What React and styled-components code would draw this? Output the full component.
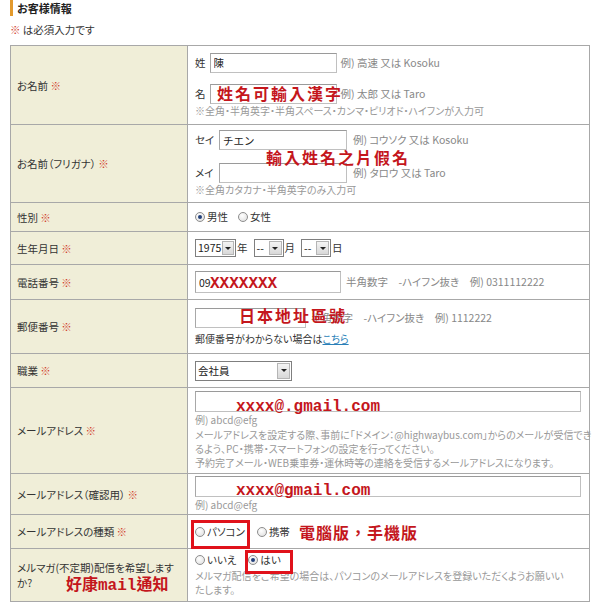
import React from 'react';
import styled, { createGlobalStyle } from 'styled-components';

const Global = createGlobalStyle`
  html, body { margin: 0; padding: 0; background: #fff; }
  body {
    font-family: "Noto Sans CJK JP", "Noto Sans", sans-serif;
    font-size: 10.5px;
    color: #333;
    font-feature-settings: "palt";
  }
`;

const Page = styled.div`
  width: 600px;
  height: 609px;
  overflow: hidden;
  padding-left: 10px;
  box-sizing: border-box;
`;

const Heading = styled.h2`
  margin: 0;
  height: 16px;
  display: flex;
  align-items: center;
  gap: 4px;
  font-size: 11px;
  font-weight: bold;
  color: #222;
  &::before {
    content: "";
    width: 3px;
    height: 16px;
    background: #e39a2c;
  }
`;

const Required = styled.p`
  margin: 7px 0 0;
  height: 14px;
  line-height: 14px;
  font-size: 10.5px;
`;

const Mark = styled.span`
  color: #d03a2a;
`;

const Table = styled.table`
  margin-top: 8px;
  width: 580px;
  table-layout: fixed;
  border-collapse: collapse;
  border: 1px solid #999;
`;

const Row = styled.tr`
  height: ${(p) => p.$h}px;
`;

const Label = styled.th`
  width: 170px;
  padding: 0 0 0 6px;
  background: #f0eed8;
  border: 1px solid #a8a8a8;
  text-align: left;
  font-weight: normal;
  vertical-align: middle;
  line-height: 15px;
  position: relative;
`;

const Cell = styled.td`
  padding: 0 6px 0 7px;
  border: 1px solid #a8a8a8;
  vertical-align: middle;
  position: relative;
  line-height: 14px;
`;

const Line = styled.div`
  display: flex;
  align-items: center;
  gap: ${(p) => p.$gap ?? 4}px;
  margin-top: ${(p) => p.$mt ?? 0}px;
  white-space: nowrap;
`;

const Prefix = styled.span`
  color: #333;
  min-width: ${(p) => p.$w ?? 0}px;
`;

const Input = styled.input`
  box-sizing: border-box;
  width: ${(p) => p.$w}px;
  height: ${(p) => p.$h ?? 20}px;
  margin: 0;
  padding: 0 3px;
  border: 1px solid #c0c0c0;
  border-top-color: #9a9a9a;
  border-left-color: #a8a8a8;
  font-family: inherit;
  font-size: 10.5px;
  color: #222;
  background: #fff;
  outline: none;
`;

const Hint = styled.span`
  color: #888;
  margin-left: ${(p) => p.$ml ?? 0}px;
`;

const Note = styled.div`
  color: ${(p) => (p.$dark ? '#333' : '#999')};
  font-size: 10px;
  white-space: nowrap;
  margin-top: ${(p) => p.$mt ?? 0}px;
`;

const Annotation = styled.span`
  position: absolute;
  left: ${(p) => p.$x}px;
  top: ${(p) => p.$y}px;
  color: #c4161c;
  font-family: ${(p) => (p.$mono ? '"Liberation Mono", "Noto Sans CJK TC", monospace' : '"Noto Sans CJK TC", sans-serif')};
  font-feature-settings: normal;
  font-weight: bold;
  font-size: ${(p) => p.$size ?? 16}px;
  letter-spacing: ${(p) => p.$ls ?? 0}px;
  line-height: 1;
  white-space: nowrap;
  pointer-events: none;
`;

const RedBox = styled.span`
  position: absolute;
  left: ${(p) => p.$x}px;
  top: ${(p) => p.$y}px;
  width: ${(p) => p.$w}px;
  height: ${(p) => p.$h}px;
  box-sizing: border-box;
  border: 3px solid #e0121b;
  pointer-events: none;
`;

const Choice = styled.label`
  display: inline-flex;
  align-items: center;
  gap: 1px;
  margin-right: ${(p) => p.$mr ?? 10}px;
  color: #333;
`;

const Radio = styled.span`
  width: 10px;
  height: 10px;
  box-sizing: border-box;
  border-radius: 50%;
  border: 1px solid #8e8e8e;
  background: radial-gradient(circle at 40% 35%, #ffffff 0%, #e6e6e6 70%, #cfcfcf 100%);
  display: inline-flex;
  align-items: center;
  justify-content: center;
  margin-right: 1px;
  &::after {
    content: "";
    width: 4px;
    height: 4px;
    border-radius: 50%;
    background: ${(p) => (p.$on ? '#23407a' : 'transparent')};
  }
`;

const Select = styled.div`
  box-sizing: border-box;
  width: ${(p) => p.$w}px;
  height: ${(p) => p.$h ?? 18}px;
  border: 1px solid #7f7f7f;
  display: flex;
  align-items: stretch;
  background: #fff;
`;

const SelectText = styled.span`
  flex: 1;
  padding-left: 2px;
  display: flex;
  align-items: center;
  color: #222;
`;

const SelectButton = styled.span`
  width: 13px;
  margin: 1px;
  box-sizing: border-box;
  border: 1px solid #b5b5b5;
  background: linear-gradient(#f4f4f4, #d8d8d8);
  display: flex;
  align-items: center;
  justify-content: center;
  &::after {
    content: "";
    border-left: 3px solid transparent;
    border-right: 3px solid transparent;
    border-top: 3px solid #222;
  }
`;

const Unit = styled.span`
  margin: 0 6px 0 1px;
  color: #333;
`;

const Link = styled.a`
  color: #2a7fb8;
  text-decoration: underline;
`;

function Req() {
  return <Mark> ※</Mark>;
}

function FakeSelect({ w, h, children }) {
  return (
    <Select $w={w} $h={h}>
      <SelectText>{children}</SelectText>
      <SelectButton />
    </Select>
  );
}

export default function App() {
  return (
    <>
      <Global />
      <Page>
        <Heading>お客様情報</Heading>
        <Required>
          <Mark>※</Mark> は必須入力です
        </Required>
        <Table>
          <colgroup>
            <col style={{ width: '177px' }} />
            <col />
          </colgroup>
          <tbody>
            <Row $h={79}>
              <Label>お名前<Req /></Label>
              <Cell>
                <Line>
                  <Prefix>姓</Prefix>
                  <Input $w={127} readOnly value="陳" />
                  <Hint>例) 高速 又は Kosoku</Hint>
                </Line>
                <Line $mt={11}>
                  <Prefix>名</Prefix>
                  <Input $w={127} readOnly value="" />
                  <Hint>例) 太郎 又は Taro</Hint>
                </Line>
                <Note>※全角・半角英字・半角スペース・カンマ・ピリオド・ハイフンが入力可</Note>
                <Annotation $x={29} $y={39} $size={16} $ls={2}>姓名可輸入漢字</Annotation>
              </Cell>
            </Row>
            <Row $h={78}>
              <Label>お名前（フリガナ）<Req /></Label>
              <Cell>
                <Line>
                  <Prefix $w={20}>セイ</Prefix>
                  <Input $w={128} readOnly value="チエン" />
                  <Hint $ml={2}>例) コウソク 又は Kosoku</Hint>
                </Line>
                <Line $mt={13}>
                  <Prefix $w={20}>メイ</Prefix>
                  <Input $w={128} readOnly value="" />
                  <Hint $ml={2}>例) タロウ 又は Taro</Hint>
                </Line>
                <Note>※全角カタカナ・半角英字のみ入力可</Note>
                <Annotation $x={78} $y={24} $size={16} $ls={2}>輸入姓名之片假名</Annotation>
              </Cell>
            </Row>
            <Row $h={29}>
              <Label>性別<Req /></Label>
              <Cell>
                <Line $gap={0}>
                  <Choice $mr={10}><Radio $on />男性</Choice>
                  <Choice><Radio />女性</Choice>
                </Line>
              </Cell>
            </Row>
            <Row $h={33}>
              <Label>生年月日<Req /></Label>
              <Cell>
                <Line $gap={0}>
                  <FakeSelect w={41}>1975</FakeSelect>
                  <Unit>年</Unit>
                  <FakeSelect w={30}>--</FakeSelect>
                  <Unit>月</Unit>
                  <FakeSelect w={30}>--</FakeSelect>
                  <Unit>日</Unit>
                </Line>
              </Cell>
            </Row>
            <Row $h={35}>
              <Label>電話番号<Req /></Label>
              <Cell>
                <Line $gap={5}>
                  <Input $w={146} $h={22} readOnly value="09" />
                  <Hint>半角数字　-ハイフン抜き　例) 0311112222</Hint>
                </Line>
                <Annotation $x={22} $y={11} $size={16} $mono>XXXXXXX</Annotation>
              </Cell>
            </Row>
            <Row $h={54}>
              <Label>郵便番号<Req /></Label>
              <Cell>
                <Line $gap={5}>
                  <Input $w={111} readOnly value="" />
                  <Hint>半角数字　-ハイフン抜き　例) 1112222</Hint>
                </Line>
                <Note $mt={4} $dark>
                  郵便番号がわからない場合は<Link href="#">こちら</Link>
                </Note>
                <Annotation $x={51} $y={7} $size={16} $ls={2}>日本地址區號</Annotation>
              </Cell>
            </Row>
            <Row $h={34}>
              <Label>職業<Req /></Label>
              <Cell>
                <FakeSelect w={97} h={20}>会社員</FakeSelect>
              </Cell>
            </Row>
            <Row $h={86}>
              <Label>メールアドレス<Req /></Label>
              <Cell>
                <Input $w={386} $h={21} readOnly value="" />
                <Note $mt={1}>例) abcd@efg</Note>
                <Note $mt={1}>メールアドレスを設定する際、事前に「ドメイン：@highwaybus.com」からのメールが受信でき</Note>
                <Note>るよう、PC・携帯・スマートフォンの設定を行ってください。</Note>
                <Note>予約完了メール・WEB乗車券・運休時等の連絡を受信するメールアドレスになります。</Note>
                <Annotation $x={48} $y={11} $size={16} $mono>xxxx@.gmail.com</Annotation>
              </Cell>
            </Row>
            <Row $h={41}>
              <Label>メールアドレス（確認用）<Req /></Label>
              <Cell>
                <Input $w={386} $h={21} readOnly value="" />
                <Note $mt={1}>例) abcd@efg</Note>
                <Annotation $x={48} $y={9} $size={16} $mono>xxxx@gmail.com</Annotation>
              </Cell>
            </Row>
            <Row $h={34}>
              <Label>メールアドレスの種類<Req /></Label>
              <Cell>
                <Line $gap={0}>
                  <Choice $mr={12}><Radio />パソコン</Choice>
                  <Choice><Radio />携帯</Choice>
                </Line>
                <RedBox $x={3} $y={5} $w={59} $h={29} />
                <Annotation $x={111} $y={9} $size={16} $ls={1}>電腦版，手機版</Annotation>
              </Cell>
            </Row>
            <Row $h={53}>
              <Label>
                メルマガ(不定期)配信を希望します<br />か?
                <Annotation $x={55} $y={29} $size={16} $mono>好康mail通知</Annotation>
              </Label>
              <Cell>
                <Line $gap={0}>
                  <Choice $mr={12}><Radio />いいえ</Choice>
                  <Choice><Radio $on />はい</Choice>
                </Line>
                <Note $mt={2}>メルマガ配信をご希望の場合は、パソコンのメールアドレスを登録いただくようお願いい</Note>
                <Note>たします。</Note>
                <RedBox $x={57} $y={1} $w={48} $h={24} />
              </Cell>
            </Row>
          </tbody>
        </Table>
      </Page>
    </>
  );
}
